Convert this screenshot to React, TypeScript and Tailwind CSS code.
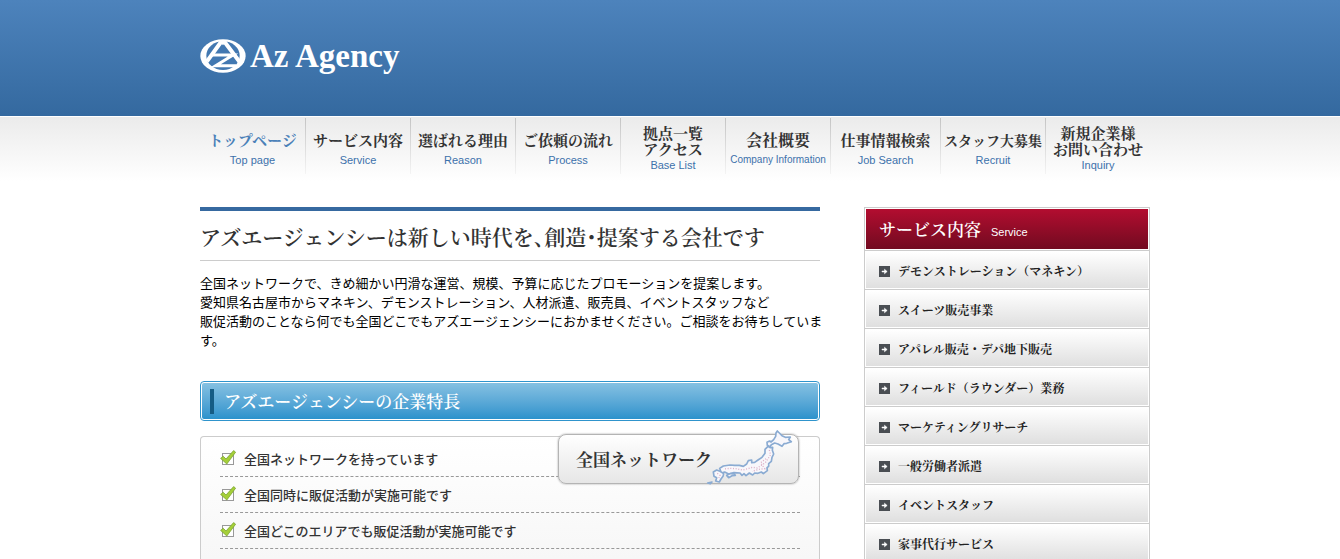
type NavItem = { ja: string[]; en: string; size: string; enSize?: string; active?: boolean };

const nav: NavItem[] = [
  { ja: ['トップページ'], en: 'Top page', size: 'text-[15px]', active: true },
  { ja: ['サービス内容'], en: 'Service', size: 'text-[15px]' },
  { ja: ['選ばれる理由'], en: 'Reason', size: 'text-[15px]' },
  { ja: ['ご依頼の流れ'], en: 'Process', size: 'text-[15px]' },
  { ja: ['拠点一覧', 'アクセス'], en: 'Base List', size: 'text-[15px]' },
  { ja: ['会社概要'], en: 'Company Information', size: 'text-[16px]', enSize: 'text-[10px]' },
  { ja: ['仕事情報検索'], en: 'Job Search', size: 'text-[15px]' },
  { ja: ['スタッフ大募集'], en: 'Recruit', size: 'text-[14px]' },
  { ja: ['新規企業様', 'お問い合わせ'], en: 'Inquiry', size: 'text-[15px]' },
];

const features = [
  '全国ネットワークを持っています',
  '全国同時に販促活動が実施可能です',
  '全国どこのエリアでも販促活動が実施可能です',
];

const services = [
  'デモンストレーション（マネキン）',
  'スイーツ販売事業',
  'アパレル販売・デパ地下販売',
  'フィールド（ラウンダー）業務',
  'マーケティングリサーチ',
  '一般労働者派遣',
  'イベントスタッフ',
  '家事代行サービス',
];

function LogoMark() {
  return (
    <svg width="46" height="34" viewBox="29 41 138 102" aria-hidden="true">
      <ellipse cx="98" cy="92" rx="68" ry="50" fill="#fff" />
      <ellipse cx="98" cy="91" rx="50" ry="43" fill="#4278b1" />
      <g fill="none" stroke="#fff" strokeWidth="12">
        <path d="M50 108 L92 50 M103 50 L148 110" />
        <path d="M62 89 H128 L76 121 H138" strokeWidth="9" />
      </g>
      <path d="M84 44 H112 L98 60 Z" fill="#fff" />
    </svg>
  );
}

function CheckIcon() {
  return (
    <svg width="16" height="17" viewBox="0 0 16 17" className="shrink-0" aria-hidden="true">
      <rect x="2.5" y="3.5" width="11" height="11" fill="#fff" stroke="#999" />
      <path
        d="M0.6 8.4 L3.2 6.2 L6 9 L13.6 0.6 L15.6 2.2 L6.8 14 Z"
        fill="#a5cf38"
        stroke="#7ba534"
        strokeWidth="0.8"
        strokeLinejoin="round"
      />
    </svg>
  );
}

function ArrowIcon() {
  return (
    <svg width="11" height="11" viewBox="0 0 11 11" className="shrink-0" aria-hidden="true">
      <rect width="11" height="11" fill="#4a4e53" />
      <path d="M3 5h2.5V3.2L8.2 5.5 5.5 7.8V6H3z" fill="#fff" stroke="#fff" strokeWidth="0.5" />
    </svg>
  );
}

function JapanMap() {
  return (
    <svg
      width="88"
      height="57"
      viewBox="20 15 264 171"
      className="absolute -top-1.5 right-1"
      aria-hidden="true"
    >
      <g fill="#f8f7fb" stroke="#8aabd2" strokeWidth="5" strokeLinejoin="round">
        <path d="M234 21 L240 27 L248 35 L258 40 L273 39 L268 47 L276 53 L262 58 L254 59 L248 67 L236 60 L226 57 L216 62 L212 68 L204 64 L203 55 L211 51 L215 54 L223 47 L229 37 L230 27 Z" />
        <path d="M206 67 L212 71 L220 70 L219 79 L223 90 L218 100 L216 112 L208 119 L208 127 L203 131 L204 140 L192 149 L186 144 L176 148 L166 147 L160 153 L150 147 L140 155 L134 149 L128 154 L122 147 L104 146 L88 150 L76 144 L66 147 L61 133 L72 126 L92 123 L106 124 L120 124 L132 127 L142 120 L147 110 L157 108 L157 116 L166 115 L176 108 L188 100 L197 88 L197 76 Z" />
        <path d="M82 154 L92 149 L104 149 L108 154 L98 155 L88 161 Z" />
        <path d="M42 144 L52 138 L62 142 L73 149 L71 157 L65 165 L60 174 L49 171 L52 161 L44 157 Z" />
        <path d="M25 177 L38 174 L33 179 Z" />
      </g>
      <path
        d="M210 78 L214 92 L206 104 L198 116 L186 124 L174 132 L160 130 L146 134 L130 138 L110 134 L92 133 L74 135 M200 104 L184 116 L196 134 L178 136 L158 142 M54 148 L62 154 L58 164"
        fill="none"
        stroke="#dcaec6"
        strokeWidth="4"
        strokeDasharray="3 5"
      />
    </svg>
  );
}

export default function App() {
  return (
    <div className="min-h-screen bg-white font-['Noto_Sans_CJK_JP',sans-serif] text-black">
      <header className="bg-linear-to-b from-[#4d83bc] to-[#34699f]">
        <div className="mx-auto h-29 max-w-[960px] pt-[39px] pl-2.5">
          <a href="#top" className="flex items-start gap-1 text-white">
            <LogoMark />
            <span className="font-['Liberation_Serif',serif] text-[33px] leading-[35px] font-bold">
              Az Agency
            </span>
          </a>
        </div>
      </header>

      <nav className="border-t border-white bg-linear-to-b from-[#ebebeb] to-white">
        <ul className="mx-auto grid h-16 max-w-[960px] grid-cols-[106fr_105fr_105fr_105fr_105fr_105fr_110fr_105fr_104fr] pl-2.5">
          {nav.map((item, i) => (
            <li key={item.en} className="flex">
              <a
                href="#nav"
                className={`flex grow flex-col items-center whitespace-nowrap ${
                  item.ja.length > 1 ? 'pt-2' : 'gap-1 pt-[15px]'
                }`}
              >
                <span
                  className={`flex flex-col items-center font-['Noto_Serif_CJK_JP','Noto_Sans_CJK_JP',serif] leading-4 font-bold ${item.size} ${
                    item.active ? 'text-[#4a80b8]' : 'text-[#333]'
                  }`}
                >
                  {item.ja.map((line) => (
                    <span key={line}>{line}</span>
                  ))}
                </span>
                <span
                  className={`font-['Liberation_Sans',sans-serif] leading-4 text-[#3c71ab] ${
                    item.enSize ?? 'text-[11px]'
                  }`}
                >
                  {item.en}
                </span>
              </a>
              {i < nav.length - 1 && (
                <span className="mt-px h-14 w-px bg-linear-to-b from-[#c4c4c4] to-[#f4f4f4]" />
              )}
            </li>
          ))}
        </ul>
      </nav>

      <div className="mx-auto flex max-w-[960px] items-start gap-11 pt-[26px] pl-2.5">
        <main className="min-w-0 grow">
          <h1 className="border-t-4 border-b border-t-[#3669a0] border-b-[#ccc] pt-[9px] pb-[7px] font-['Noto_Serif_CJK_JP','Noto_Sans_CJK_JP',serif] text-[21px] leading-[33px] font-semibold whitespace-nowrap text-[#333] [font-feature-settings:'halt']">
            アズエージェンシーは新しい時代を、創造・提案する会社です
          </h1>
          <p className="mt-3 text-[13px] leading-[19px] whitespace-nowrap">
            全国ネットワークで、きめ細かい円滑な運営、規模、予算に応じたプロモーションを提案します。
            <br />
            愛知県名古屋市からマネキン、デモンストレーション、人材派遣、販売員、イベントスタッフなど
            <br />
            販促活動のことなら何でも全国どこでもアズエージェンシーにおかませください。ご相談をお待ちしていま
            <br />
            す。
          </p>

          <h2 className="mt-8 rounded border border-[#2f94cc] p-px">
            <span className="flex h-9 items-center gap-2.5 rounded-xs bg-linear-to-b from-[#85c1e2] to-[#2a92cc] px-2 font-['Noto_Serif_CJK_JP','Noto_Sans_CJK_JP',serif] text-[17px] font-semibold text-white">
              <span className="h-[25px] w-1 bg-[#155c85]" />
              アズエージェンシーの企業特長
            </span>
          </h2>

          <section className="relative mt-[15px] rounded-t border border-b-0 border-[#ccc] bg-linear-to-b from-white to-[#f5f5f5]">
            <ul className="px-[19px] pt-1">
              {features.map((text) => (
                <li
                  key={text}
                  className="flex h-9 items-center gap-2 border-b border-dashed border-[#999] text-[13px] font-medium text-[#333]"
                >
                  <CheckIcon />
                  {text}
                </li>
              ))}
            </ul>
            <div className="h-10" />
            <a
              href="#network"
              className="absolute -top-[3px] right-5 flex h-[50px] w-[241px] items-center rounded-lg border border-[#b4b4b4] bg-linear-to-b from-white to-[#e6e6e6] pl-[17px] font-['Noto_Serif_CJK_JP','Noto_Sans_CJK_JP',serif] text-[17px] font-bold text-[#333] shadow-[0_0_2px_#999]"
            >
              全国ネットワーク
              <JapanMap />
            </a>
          </section>
        </main>

        <aside className="w-[286px] shrink-0 border border-b-0 border-[#ccc] font-['Noto_Serif_CJK_JP','Noto_Sans_CJK_JP',serif]">
          <h2 className="p-px">
            <span className="flex h-10 items-center gap-2.5 bg-linear-to-b from-[#b30d30] to-[#720a20] px-[13px] text-[17px] font-semibold text-white">
              サービス内容
              <span className="pt-1.5 font-['Liberation_Sans',sans-serif] text-[11px] font-normal">
                Service
              </span>
            </span>
          </h2>
          <ul>
            {services.map((name) => (
              <li key={name} className="border-t border-[#ccc] p-px">
                <a
                  href="#service"
                  className="flex h-9 items-center gap-2 bg-linear-to-b from-white to-[#dfdfdf] px-[13px] pt-0.5 text-[12px] font-bold text-[#222]"
                >
                  <ArrowIcon />
                  {name}
                </a>
              </li>
            ))}
          </ul>
        </aside>
      </div>
    </div>
  );
}
